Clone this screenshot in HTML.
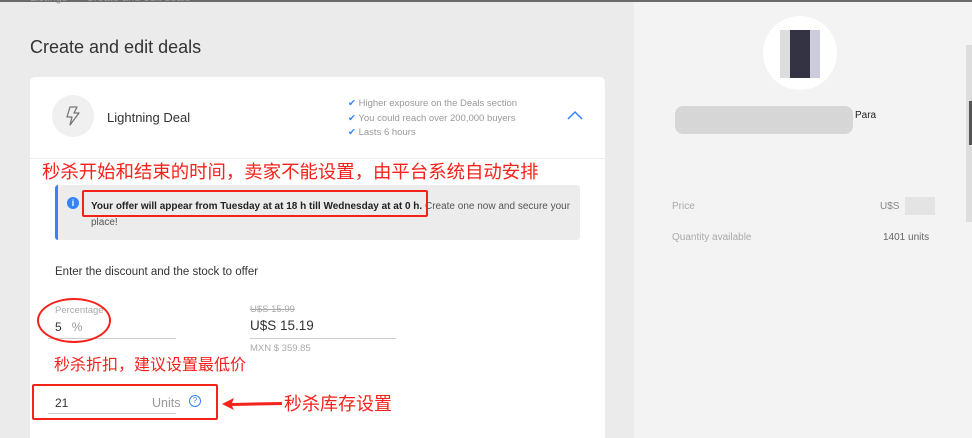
<!DOCTYPE html>
<html><head><meta charset="utf-8"><style>
*{margin:0;padding:0;box-sizing:border-box}
html,body{width:972px;height:438px;overflow:hidden}
body{background:#ebebeb;font-family:"Liberation Sans","Noto Sans CJK SC",sans-serif;position:relative;color:#333}
.a{position:absolute}
.red{color:#f5221b;font-family:"Liberation Sans","Noto Sans CJK SC",sans-serif;white-space:nowrap}
</style></head><body>
<div class="a" style="left:0;top:0;width:972px;height:2px;background:#6a6a6a"></div>
<div class="a" style="left:30px;top:-8px;font-size:11px;color:#999">Listings &nbsp;&gt;&nbsp; Create and edit deals</div>
<div class="a" style="left:30px;top:37px;font-size:18px;color:#333">Create and edit deals</div>
<div class="a" style="left:30px;top:77px;width:575px;height:370px;background:#fff;border-radius:5px"></div>
<div class="a" style="left:30px;top:158px;width:575px;height:1px;background:#eee"></div>
<div class="a" style="left:52px;top:95px;width:42px;height:42px;border-radius:50%;background:#f0f0f0"></div>
<svg class="a" style="left:61px;top:104px" width="24" height="24" viewBox="0 0 24 24"><path d="M9 3h7l-3 6h5l-9 12 2-8H6z" fill="none" stroke="#777" stroke-width="1.3" stroke-linejoin="round"/></svg>
<div class="a" style="left:107px;top:110px;font-size:13px;color:#333">Lightning Deal</div>
<div class="a" style="left:348px;top:97px;font-size:9.5px;color:#999;line-height:14.5px">
<div><span style="color:#3483fa">✔</span> Higher exposure on the Deals section</div>
<div><span style="color:#3483fa">✔</span> You could reach over 200,000 buyers</div>
<div><span style="color:#3483fa">✔</span> Lasts 6 hours</div></div>
<svg class="a" style="left:566px;top:109px" width="18" height="12"><path d="M2 10l7-7 7 7" fill="none" stroke="#3483fa" stroke-width="1.5"/></svg>
<div class="a red" style="left:42px;top:158px;font-size:18.4px">秒杀开始和结束的时间，卖家不能设置，由平台系统自动安排</div>
<div class="a" style="left:55px;top:185px;width:525px;height:55px;background:#ececec;border-left:3px solid #3483fa;border-radius:3px"></div>
<div class="a" style="left:67px;top:197px;width:12px;height:12px;border-radius:50%;background:#3483fa;color:#fff;font-size:9px;text-align:center;line-height:12px;font-weight:bold">i</div>
<div class="a" style="left:91px;top:199px;font-size:10px;line-height:16px;color:#555;width:480px"><b style="color:#222">Your offer will appear from Tuesday at at 18 h till Wednesday at at 0 h.</b> Create one now and secure your place!</div>
<div class="a" style="left:82px;top:190px;width:346px;height:27px;border:2px solid #f5221b;border-radius:2px"></div>
<div class="a" style="left:55px;top:266px;font-size:11.5px;color:#333">Enter the discount and the stock to offer</div>
<div class="a" style="left:55px;top:305px;font-size:9.5px;color:#aaa">Percentage</div>
<div class="a" style="left:55px;top:320px;font-size:12px;color:#333">5 &nbsp;&nbsp;<span style="color:#999">%</span></div>
<div class="a" style="left:48px;top:338px;width:128px;height:1px;background:#ccc"></div>
<div class="a" style="left:37px;top:298px;width:74px;height:45px;border:2px solid #f5221b;border-radius:50%"></div>
<div class="a" style="left:250px;top:304px;font-size:9.5px;color:#aaa;text-decoration:line-through">U$S 15.99</div>
<div class="a" style="left:250px;top:318px;font-size:13.5px;color:#333">U$S 15.19</div>
<div class="a" style="left:250px;top:338px;width:146px;height:1px;background:#ccc"></div>
<div class="a" style="left:250px;top:343px;font-size:9.5px;color:#aaa">MXN $ 359.85</div>
<div class="a red" style="left:54px;top:351px;font-size:16px">秒杀折扣，建议设置最低价</div>
<div class="a" style="left:55px;top:396px;font-size:12px;color:#333">21</div>
<div class="a" style="left:152px;top:396px;font-size:12.5px;color:#999">Units</div>
<div class="a" style="left:189px;top:395px;width:12px;height:12px;border-radius:50%;border:1.3px solid #3483fa;color:#3483fa;font-size:8px;text-align:center;line-height:10px">?</div>
<div class="a" style="left:48px;top:413px;width:128px;height:1px;background:#ccc"></div>
<div class="a" style="left:32px;top:384px;width:186px;height:36px;border:2px solid #f5221b;border-radius:2px"></div>
<svg class="a" style="left:220px;top:396px" width="64" height="16"><path d="M2 8L14 2L12 7L62 6L62 9L12 10L14 14Z" fill="#f5221b"/></svg>
<div class="a red" style="left:284px;top:390px;font-size:18px">秒杀库存设置</div>
<div class="a" style="left:634px;top:2px;width:332px;height:436px;background:#f3f3f3"></div>
<div class="a" style="left:763px;top:16px;width:74px;height:74px;border-radius:50%;background:#fff"></div>
<div class="a" style="left:780px;top:30px;width:40px;height:48px;background:linear-gradient(90deg,#ddd 0 25%,#334 25% 75%,#ccd 75%)"></div>
<div class="a" style="left:675px;top:106px;width:178px;height:28px;background:#d6d6d6;border-radius:8px"></div>
<div class="a" style="left:855px;top:110px;font-size:10px;color:#222">Para</div>
<div class="a" style="left:672px;top:201px;font-size:10px;color:#aaa">Price</div>
<div class="a" style="left:880px;top:201px;font-size:10px;color:#888">U$S</div>
<div class="a" style="left:905px;top:197px;width:30px;height:18px;background:#e4e4e4"></div>
<div class="a" style="left:672px;top:232px;font-size:10px;color:#aaa">Quantity available</div>
<div class="a" style="left:883px;top:232px;font-size:10px;color:#666">1401 units</div>
<div class="a" style="left:966px;top:2px;width:6px;height:436px;background:#f3f3f3"></div>
<div class="a" style="left:966px;top:45px;width:6px;height:177px;background:#ddd"></div>
<div class="a" style="left:969px;top:101px;width:3px;height:44px;background:#555"></div>
</body></html>
